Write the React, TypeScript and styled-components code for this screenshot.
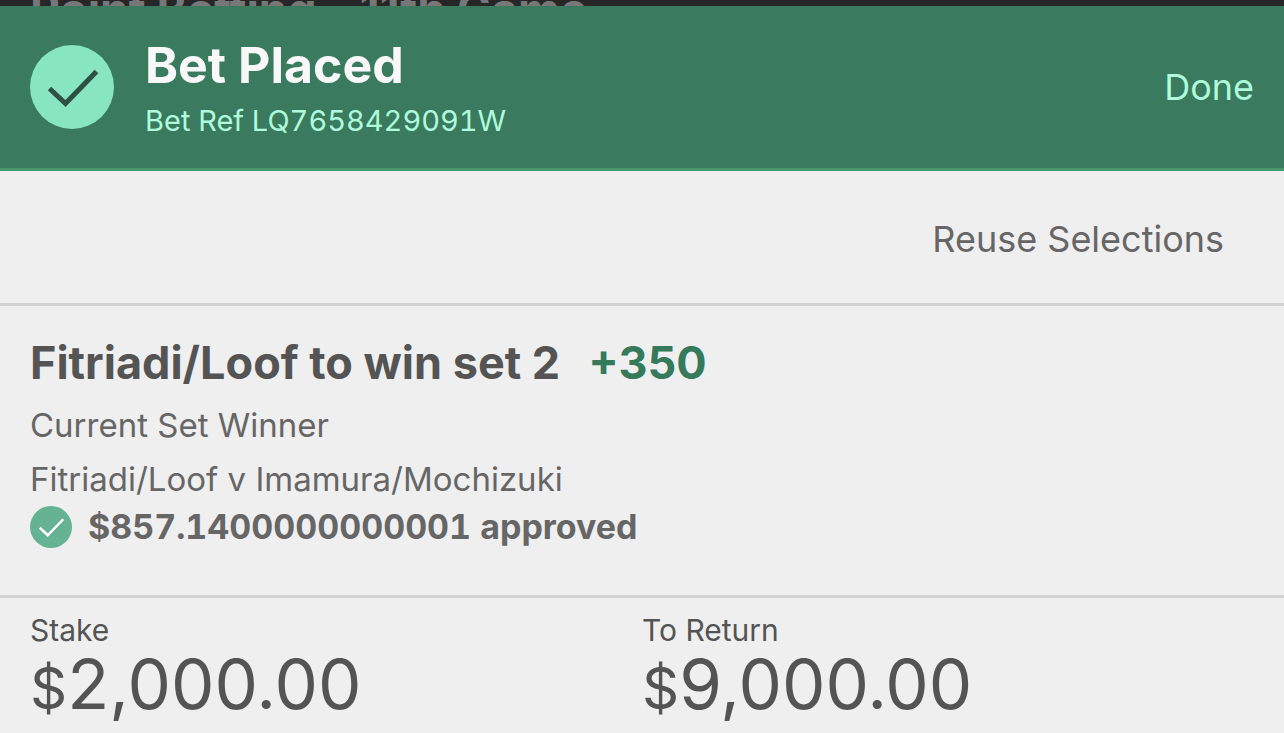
import React from "react";
import styled, { createGlobalStyle } from "styled-components";

const GlobalStyle = createGlobalStyle`
  *, *::before, *::after { box-sizing: border-box; }
  body {
    margin: 0;
    background: #efefef;
    color: #545454;
    font-family: Inter, "Liberation Sans", sans-serif;
  }
  h1, h2, p, dl, dt, dd { margin: 0; }
`;

const Receipt = styled.main`
  display: flex;
  flex-direction: column;
  min-height: 100vh;
  overflow: hidden;
`;

const Backdrop = styled.div`
  height: 6px;
  padding: 0 30px;
  overflow: hidden;
  background: #262626;
  color: #777777;
  font-size: 46px;
  font-weight: 700;
  line-height: 18px;
  white-space: nowrap;
`;

const Header = styled.header`
  display: flex;
  align-items: center;
  gap: 31px;
  padding: 31px 30px;
  background: #3a7a5e;
  border-bottom: 3px solid #479870;
`;

const HeaderText = styled.div`
  display: flex;
  flex: 1;
  flex-direction: column;
  gap: 12px;
`;

const Title = styled.h1`
  color: #f8f8f8;
  font-size: 50px;
  font-weight: 700;
  line-height: 56px;
`;

const Reference = styled.p`
  color: #affbdc;
  font-size: 29px;
  font-variant-numeric: tabular-nums;
  line-height: 32px;
`;

const TextButton = styled.button<{ $color: string }>`
  padding: 0;
  border: 0;
  background: none;
  color: ${(p) => p.$color};
  font: inherit;
  font-size: 36px;
  line-height: 44px;
  cursor: pointer;
`;

const Toolbar = styled.div`
  display: flex;
  justify-content: flex-end;
  padding: 46px 60px 42px;
  border-bottom: 3px solid #d2d2d2;
`;

const Selection = styled.section`
  padding: 30px 30px 47px;
  border-bottom: 3px solid #d2d2d2;
`;

const SelectionTitle = styled.h2`
  display: flex;
  gap: 28px;
  margin-bottom: 8px;
  font-size: 45px;
  font-weight: 700;
  line-height: 54px;
`;

const Odds = styled.span`
  color: #367a5c;
`;

const Detail = styled.p`
  color: #666666;
  font-size: 33px;
  line-height: 54px;
`;

const Approval = styled.p`
  display: flex;
  align-items: center;
  gap: 16px;
  color: #666666;
  font-size: 34px;
  font-variant-numeric: tabular-nums;
  font-weight: 700;
  line-height: 42px;
`;

const Totals = styled.dl`
  display: grid;
  grid-template-columns: 1fr 1fr;
  padding: 14px 30px;
`;

const Label = styled.dt`
  font-size: 30px;
  line-height: 36px;
`;

const Amount = styled.dd`
  font-size: 69px;
  line-height: 72px;
`;

const Currency = styled.span`
  font-size: 58px;
`;

const Badge = styled.svg`
  flex: none;
  display: block;
`;

function Tick({ size, fill, stroke, width }: { size: number; fill: string; stroke: string; width: number }) {
  return (
    <Badge width={size} height={size} viewBox="0 0 84 84" aria-hidden="true">
      <circle cx="42" cy="42" r="42" fill={fill} />
      <path d="M19.5 43.5 L35.5 58.5 L66.5 26.5" fill="none" stroke={stroke} strokeWidth={width} />
    </Badge>
  );
}

function Total({ label, value }: { label: string; value: string }) {
  return (
    <div>
      <Label>{label}</Label>
      <Amount>
        <Currency>$</Currency>
        {value}
      </Amount>
    </div>
  );
}

export default function App() {
  return (
    <>
      <GlobalStyle />
      <Receipt>
        <Backdrop>Point Betting - 11th Game</Backdrop>
        <Header>
          <Tick size={84} fill="#87e5c0" stroke="#2f5143" width={5} />
          <HeaderText>
            <Title>Bet Placed</Title>
            <Reference>Bet Ref LQ7658429091W</Reference>
          </HeaderText>
          <TextButton type="button" $color="#affbdc">Done</TextButton>
        </Header>
        <Toolbar>
          <TextButton type="button" $color="#666666">Reuse Selections</TextButton>
        </Toolbar>
        <Selection>
          <SelectionTitle>
            Fitriadi/Loof to win set 2 <Odds>+350</Odds>
          </SelectionTitle>
          <Detail>Current Set Winner</Detail>
          <Detail>Fitriadi/Loof v Imamura/Mochizuki</Detail>
          <Approval>
            <Tick size={42} fill="#65b393" stroke="#ffffff" width={5} />
            $857.1400000000001 approved
          </Approval>
        </Selection>
        <Totals>
          <Total label="Stake" value="2,000.00" />
          <Total label="To Return" value="9,000.00" />
        </Totals>
      </Receipt>
    </>
  );
}
